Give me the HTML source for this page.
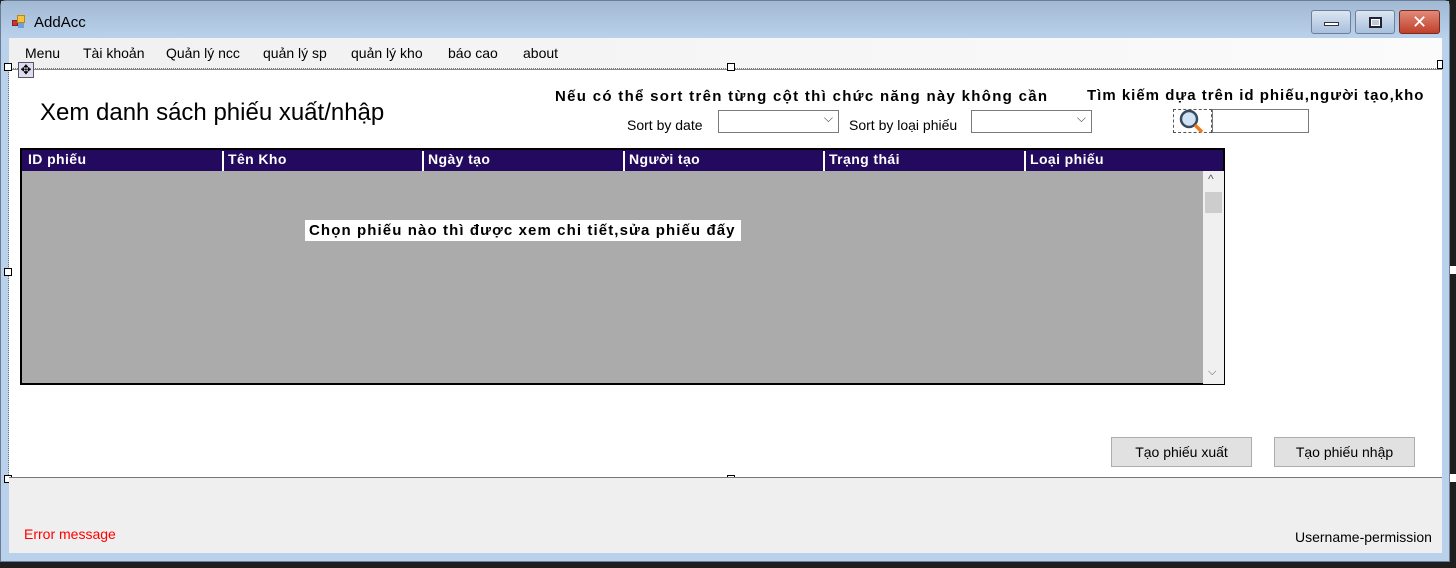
<!DOCTYPE html>
<html><head><meta charset="utf-8"><style>
*{margin:0;padding:0;box-sizing:border-box}
body{width:1456px;height:568px;background:#1e1e1e;position:relative;overflow:hidden;font-family:"Liberation Sans","DejaVu Sans",sans-serif}
.a{position:absolute}
.win{left:0;top:0;width:1450px;height:562px;background:#b9d1ea;border:1px solid #6a7d94;border-radius:6px 6px 0 0}
.title{left:1px;top:1px;width:1448px;height:37px;background:linear-gradient(#a2b9d4,#b9d1ea)}
.menu{left:9px;top:38px;width:1433px;height:31px;background:linear-gradient(90deg,#f0f0f0,#fbfbfb)}
.menu span{position:absolute;top:7px;font-size:14px;color:#000}
.content{left:9px;top:69px;width:1433px;height:408px;background:#fff;border-top:1px solid #888}
.bottom{left:9px;top:477px;width:1433px;height:76px;background:#efefef;border-top:1px solid #777}
.tb{top:10px;width:40px;height:24px;border:1px solid #6d7f99;border-radius:3px;background:linear-gradient(#dbe6f3,#a9bfdc)}
.combo{height:23px;border:1px solid #7a7a7a;background:#fff}
.combo:after{content:"⌵";position:absolute;right:5px;top:0px;font-size:12px;color:#444}
.hd{top:151px;height:20px;font-size:14px;font-weight:bold;color:#fff;letter-spacing:0.4px}
.btn{top:437px;width:141px;height:30px;background:#e1e1e1;border:1px solid #adadad;font-size:14px;text-align:center;line-height:28px}
</style></head><body>
<div class="a win"></div>
<div class="a title"></div>
<div class="a" style="left:12px;top:15px;width:14px;height:14px">
<div class="a" style="left:0;top:5px;width:6px;height:6px;background:#c33;border:1px solid #822"></div>
<div class="a" style="left:5px;top:0;width:8px;height:8px;background:#f5c242;border:1px solid #b80"></div>
<div class="a" style="left:6px;top:8px;width:6px;height:5px;background:#6aa0e0"></div></div>
<div class="a" style="left:34px;top:14px;font-size:15px;color:#000">AddAcc</div>
<div class="a tb" style="left:1311px"><div class="a" style="left:12px;top:11px;width:15px;height:4px;background:#fff;border:1px solid #334"></div></div>
<div class="a tb" style="left:1355px"><div class="a" style="left:13px;top:6px;width:13px;height:11px;border:2px solid #223;background:#fff"><div style="margin:1px;height:5px;background:#bcd"></div></div></div>
<div class="a tb" style="left:1399px;width:41px;background:linear-gradient(#e08a78,#c0402a);border-color:#7a2a1f;color:#fff;font-weight:bold;font-size:18px;text-align:center;line-height:22px">✕</div>
<div class="a menu">
<span style="left:16px">Menu</span><span style="left:74px">Tài khoản</span><span style="left:157px">Quản lý ncc</span><span style="left:254px">quản lý sp</span><span style="left:342px">quản lý kho</span><span style="left:439px">báo cao</span><span style="left:514px">about</span></div>
<div class="a content"></div>
<div class="a" style="left:9px;top:68px;width:1433px;border-top:1px dotted #777"></div>
<div class="a" style="left:8px;top:69px;height:408px;border-left:1px dotted #777"></div>
<div class="a" style="left:4px;top:63px;width:8px;height:8px;background:#fff;border:1px solid #000"></div>
<div class="a" style="left:727px;top:63px;width:8px;height:8px;background:#fff;border:1px solid #000"></div>
<div class="a" style="left:4px;top:268px;width:8px;height:8px;background:#fff;border:1px solid #000"></div>
<div class="a" style="left:4px;top:475px;width:8px;height:8px;background:#fff;border:1px solid #000"></div>
<div class="a" style="left:727px;top:475px;width:8px;height:8px;background:#fff;border:1px solid #000"></div>
<div class="a" style="left:18px;top:62px;width:16px;height:16px;background:#dde;border:1px solid #556;font-size:13px;line-height:13px;text-align:center">✥</div>
<div class="a" style="left:40px;top:99px;font-size:24px;color:#000">Xem danh sách phiếu xuất/nhập</div>
<div class="a" style="left:555px;top:88px;font-size:15px;font-weight:bold;letter-spacing:1.3px;white-space:nowrap">Nếu có thể sort trên từng cột thì chức năng này không cần</div>
<div class="a" style="left:1087px;top:87px;font-size:15px;font-weight:bold;letter-spacing:1px;white-space:nowrap">Tìm kiếm dựa trên id phiếu,người tạo,kho</div>
<div class="a" style="left:627px;top:117px;font-size:14px">Sort by date</div>
<div class="a combo" style="left:718px;top:110px;width:121px"></div>
<div class="a" style="left:849px;top:117px;font-size:14px">Sort by loại phiếu</div>
<div class="a combo" style="left:971px;top:110px;width:121px"></div>
<div class="a" style="left:1173px;top:109px;width:39px;height:24px;border:1px dashed #555"></div>
<svg class="a" style="left:1178px;top:108px" width="30" height="27"><circle cx="11" cy="11" r="8" fill="#cfe3f5" stroke="#3a4a5e" stroke-width="2.5"/><line x1="17" y1="17" x2="24" y2="24" stroke="#f07a1a" stroke-width="3.5"/></svg>
<div class="a" style="left:1212px;top:109px;width:97px;height:24px;border:1px solid #7a7a7a;background:#fff"></div>
<div class="a" style="left:20px;top:148px;width:1205px;height:237px;border:2px solid #000;background:#ababab"></div>
<div class="a" style="left:22px;top:150px;width:1201px;height:21px;background:#230a5f"></div>
<div class="a hd" style="left:28px">ID phiếu</div>
<div class="a hd" style="left:222px;border-left:2px solid #fff;padding-left:4px">Tên Kho</div>
<div class="a hd" style="left:422px;border-left:2px solid #fff;padding-left:4px">Ngày tạo</div>
<div class="a hd" style="left:623px;border-left:2px solid #fff;padding-left:4px">Người tạo</div>
<div class="a hd" style="left:823px;border-left:2px solid #fff;padding-left:4px">Trạng thái</div>
<div class="a hd" style="left:1024px;border-left:2px solid #fff;padding-left:4px">Loại phiếu</div>
<div class="a" style="left:1203px;top:171px;width:21px;height:213px;background:#f0f0f0"></div>
<div class="a" style="left:1205px;top:192px;width:17px;height:21px;background:#cdcdcd"></div>
<div class="a" style="left:1208px;top:172px;font-size:12px;color:#555">^</div>
<div class="a" style="left:1208px;top:366px;font-size:11px;color:#555">⌵</div>
<div class="a" style="left:305px;top:220px;width:436px;height:21px;background:#fff;font-size:15px;font-weight:bold;padding-left:4px;line-height:21px;letter-spacing:1.1px;white-space:nowrap">Chọn phiếu nào thì được xem chi tiết,sửa phiếu đấy</div>
<div class="a btn" style="left:1111px">Tạo phiếu xuất</div>
<div class="a btn" style="left:1274px">Tạo phiếu nhập</div>
<div class="a bottom"></div>
<div class="a" style="left:9px;top:477px;width:1433px;border-top:1px dotted #777"></div>
<div class="a" style="left:24px;top:526px;font-size:14px;color:#f00">Error message</div>
<div class="a" style="left:1295px;top:529px;font-size:14px">Username-permission</div>
<div class="a" style="left:1437px;top:60px;width:6px;height:9px;background:#fff;border:1px solid #000"></div>
<div class="a" style="left:1450px;top:266px;width:6px;height:8px;background:#fff"></div>
<div class="a" style="left:1450px;top:474px;width:6px;height:8px;background:#fff"></div>
</body></html>
